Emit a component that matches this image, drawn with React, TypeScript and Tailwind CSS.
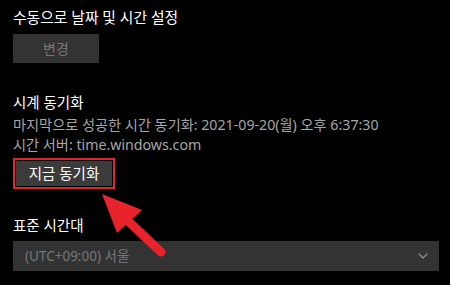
import { ChevronDown } from "lucide-react";

const FONT = "font-['Noto_Sans','Noto_Sans_CJK_KR',sans-serif]";

export default function App() {
  return (
    <div className={`relative h-[285px] w-[450px] overflow-hidden bg-black pl-[13px] ${FONT}`}>
      {/* 수동 설정 */}
      <div className="pt-[7px] text-[14.8px] leading-[20px] text-white">수동으로 날짜 및 시간 설정</div>
      <button
        disabled
        className="mt-[7px] flex h-[29px] w-[86px] items-center justify-center bg-[#333333] text-[14px] text-[#767676]"
      >
        변경
      </button>

      {/* 시계 동기화 */}
      <div className="mt-[29px] text-[14.5px] leading-[20px] text-white">시계 동기화</div>
      <div className="mt-[3px] text-[14.2px] leading-[20px] text-[#a6a6a6]">
        <p>마지막으로 성공한 시간 동기화: 2021-09-20(월) 오후 6:37:30</p>
        <p>시간 서버: time.windows.com</p>
      </div>
      <div className="mt-[3px] w-[102px] border-[2px] border-[#e0262d] p-px">
        <button className="flex h-[25px] w-full items-center justify-center bg-[#3b3b3b] text-[14.5px] text-white">
          지금 동기화
        </button>
      </div>

      {/* 표준 시간대 */}
      <div className="mt-[26px] text-[14.5px] leading-[20px] text-white">표준 시간대</div>
      <div className="mt-[6px] flex h-[30px] w-[426px] items-center justify-between bg-[#333333] pl-[12px] pr-[8px]">
        <span className="text-[13.5px] text-[#777777]">(UTC+09:00) 서울</span>
        <ChevronDown size={16} strokeWidth={2} className="text-[#8a8a8a]" />
      </div>

      {/* 빨간 화살표 */}
      <svg className="absolute left-[95px] top-[188px]" width="80" height="75" viewBox="0 0 80 75">
        <polygon points="7,6 47,22 22,45" fill="#e8232b" />
        <line x1="32" y1="32" x2="66" y2="64" stroke="#e8232b" strokeWidth="9" strokeLinecap="round" />
      </svg>
    </div>
  );
}
